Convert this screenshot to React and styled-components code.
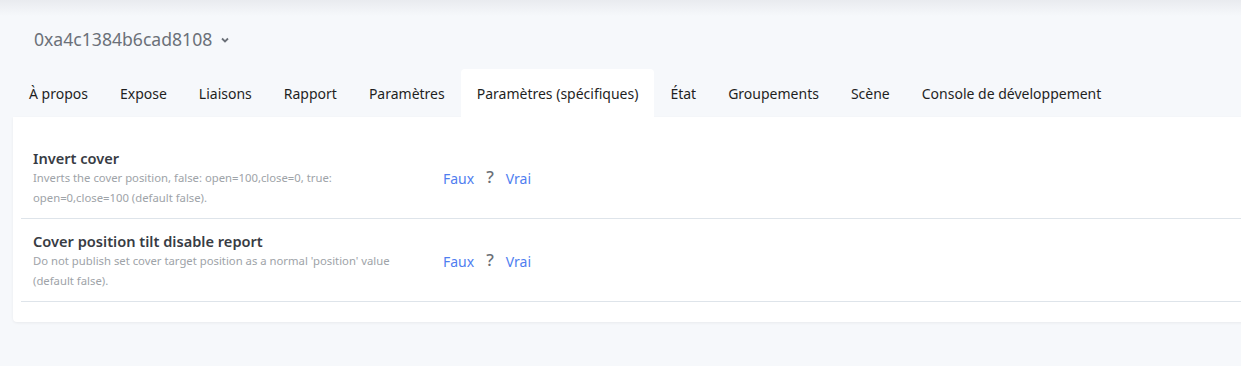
import React from 'react';
import styled, { createGlobalStyle } from 'styled-components';

const GlobalStyle = createGlobalStyle`
  *, *::before, *::after {
    box-sizing: border-box;
  }

  html, body {
    margin: 0;
    padding: 0;
    background: #f6f8fb;
    font-family: 'Noto Sans', 'Open Sans', sans-serif;
    color: #222;
  }
`;

const Page = styled.div`
  height: 366px;
  background: linear-gradient(#e9ebef 0px, #f6f8fb 16px);
  padding-top: 24px;
  overflow: hidden;
`;

const DeviceTitle = styled.div`
  display: flex;
  align-items: center;
  gap: 8px;
  padding-left: 34px;
  height: 30px;
  font-size: 17.6px;
  color: #6b7078;
`;

const Chevron = styled.svg`
  width: 10px;
  height: 10px;
  margin-top: 2px;
`;

const Tabs = styled.div`
  display: flex;
  padding-left: 13px;
  margin-top: 15px;
  height: 48px;
`;

const Tab = styled.div`
  display: flex;
  align-items: center;
  padding: 0 16px;
  font-size: 14px;
  color: #1f1f1f;
  white-space: nowrap;
  border-radius: 4px 4px 0 0;
  background: ${props => (props.active ? '#ffffff' : 'transparent')};
`;

const Card = styled.div`
  margin-left: 13px;
  margin-right: -10px;
  background: #ffffff;
  border-radius: 0 0 4px 4px;
  box-shadow: 0 1px 3px rgba(0, 0, 0, 0.06);
  padding: 19px 8px 20px;
`;

const Row = styled.div`
  display: flex;
  align-items: center;
  padding: 12px 12px 10px;
  border-bottom: 1.5px solid #dee4ea;
`;

const Label = styled.div`
  width: 400px;
  flex-shrink: 0;
`;

const Title = styled.div`
  font-size: 14.6px;
  font-weight: 600;
  line-height: 20px;
  color: #383c44;
`;

const Description = styled.div`
  font-size: 11.3px;
  line-height: 20px;
  color: #9ea3a8;
  width: 372px;
`;

const Controls = styled.div`
  display: flex;
  align-items: center;
  gap: 12px;
  margin-left: 10px;
  font-size: 14px;
`;

const Choice = styled.span`
  color: #4f7ef0;
  cursor: pointer;
`;

const Unset = styled.span`
  color: #6a6f76;
  font-size: 17px;
  font-weight: 500;
  margin-top: -4px;
`;

const tabs = [
  'À propos',
  'Expose',
  'Liaisons',
  'Rapport',
  'Paramètres',
  'Paramètres (spécifiques)',
  'État',
  'Groupements',
  'Scène',
  'Console de développement'
];

const settings = [
  {
    title: 'Invert cover',
    description:
      'Inverts the cover position, false: open=100,close=0, true: open=0,close=100 (default false).'
  },
  {
    title: 'Cover position tilt disable report',
    description:
      "Do not publish set cover target position as a normal 'position' value (default false)."
  }
];

export default function App() {
  return (
    <>
      <GlobalStyle />
      <Page>
        <DeviceTitle>
          0xa4c1384b6cad8108
          <Chevron viewBox="0 0 10 10">
            <path d="M2 3.5 L5 6.5 L8 3.5" fill="none" stroke="#6b7078" strokeWidth="1.8" />
          </Chevron>
        </DeviceTitle>
        <Tabs>
          {tabs.map(t => (
            <Tab key={t} active={t === 'Paramètres (spécifiques)'}>
              {t}
            </Tab>
          ))}
        </Tabs>
        <Card>
          {settings.map(s => (
            <Row key={s.title}>
              <Label>
                <Title>{s.title}</Title>
                <Description>{s.description}</Description>
              </Label>
              <Controls>
                <Choice>Faux</Choice>
                <Unset>?</Unset>
                <Choice>Vrai</Choice>
              </Controls>
            </Row>
          ))}
        </Card>
      </Page>
    </>
  );
}
